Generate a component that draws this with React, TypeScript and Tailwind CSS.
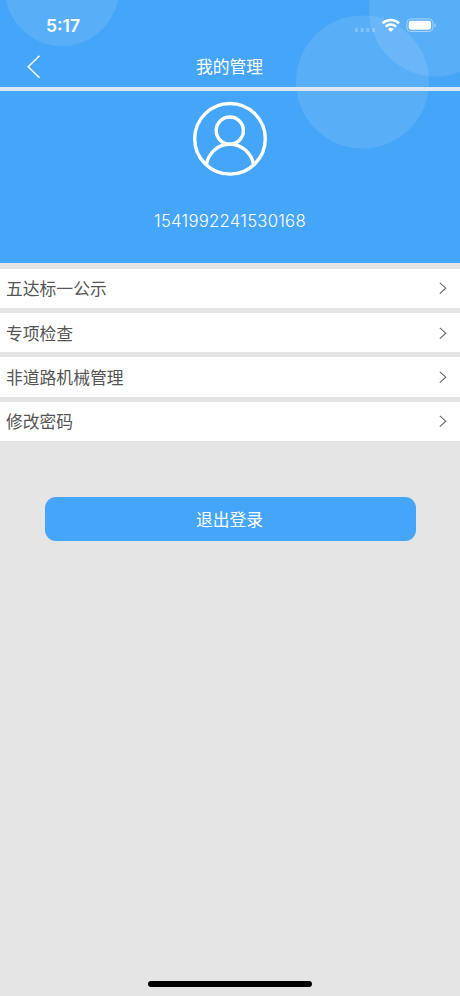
import React from "react";

const MENU_ITEMS = ["五达标一公示", "专项检查", "非道路机械管理", "修改密码"];

export default function App() {
  return (
    <div className="w-[460px] h-[996px] relative flex flex-col overflow-hidden bg-[#e5e5e5] font-['Inter','Noto_Sans_CJK_SC',sans-serif]">
      <header className="relative h-[263px] shrink-0 flex flex-col overflow-hidden bg-[#45a5f8] text-white">
        <Bubbles />
        <StatusBar />
        <NavBar title="我的管理" />
        <div className="relative h-[4px] shrink-0 bg-[#dce7f1]" />
        <Profile account="1541992241530168" />
      </header>

      <ul className="mt-[5.5px] flex flex-col gap-[5px]">
        {MENU_ITEMS.map((label) => (
          <MenuRow key={label} label={label} />
        ))}
      </ul>

      <button className="mt-[55.5px] ml-[44.5px] w-[371px] h-[44.5px] shrink-0 rounded-[11px] bg-[#45a5f8] pt-[3px] pr-[1px] text-white text-[16.8px] leading-none">
        退出登录
      </button>

      <div className="mt-auto mb-[9px] mx-auto w-[164px] h-[6px] rounded-full bg-black" />
    </div>
  );
}

function Bubbles() {
  return (
    <svg className="absolute inset-0" width="460" height="263" fill="#fff" fillOpacity="0.11">
      <circle cx="62" cy="-11" r="57" />
      <circle cx="362.5" cy="82" r="66.5" />
      <circle cx="436" cy="9.5" r="67" />
    </svg>
  );
}

function StatusBar() {
  return (
    <div className="relative h-[46px] shrink-0 flex items-start justify-between pl-[46px]">
      <span className="pt-[16px] text-[17.5px] leading-[20px] font-semibold">5:17</span>
      <svg width="120" height="46" viewBox="340 0 120 46" fill="none">
        <g fill="#fff" fillOpacity="0.25">
          <rect x="355" y="28" width="3" height="4" rx="0.8" />
          <rect x="360.7" y="28" width="3" height="4" rx="0.8" />
          <rect x="366.4" y="28" width="3" height="4" rx="0.8" />
          <rect x="372.1" y="28" width="3" height="4" rx="0.8" />
        </g>
        <g stroke="#fff" strokeWidth="2.5">
          <path d="M382.5 23.3a11.8 11.8 0 0 1 16.6 0" />
          <path d="M385.6 26.6a7.5 7.5 0 0 1 10.4 0" />
        </g>
        <path d="M387.9 29.1a4.4 4.4 0 0 1 5.8 0l-2.9 3z" fill="#fff" />
        <rect x="406.9" y="18.9" width="26" height="12.6" rx="4" stroke="#fff" strokeOpacity="0.45" />
        <rect x="408.7" y="20.7" width="22.4" height="9" rx="2.4" fill="#fff" />
        <path d="M434.3 23.2c1.8.7 1.8 3.3 0 4z" fill="#fff" fillOpacity="0.5" />
      </svg>
    </div>
  );
}

function NavBar({ title }: { title: string }) {
  return (
    <div className="relative h-[41px] shrink-0 grid grid-cols-[1fr_auto_1fr] items-center">
      <svg className="ml-[26px]" width="16" height="26" viewBox="0 0 16 26" fill="none" stroke="#fff" strokeWidth="1.5">
        <path d="M13.5 1.8 2.2 12.7l11.3 11" />
      </svg>
      <h1 className="pt-[2px] pr-[1px] text-[16.8px] leading-none font-normal">{title}</h1>
    </div>
  );
}

function Profile({ account }: { account: string }) {
  return (
    <div className="relative flex flex-col items-center pt-[10px]">
      <svg width="76" height="76" viewBox="0 0 76 76" fill="none" stroke="#fff" strokeWidth="3.4">
        <circle cx="38" cy="37.8" r="35.3" />
        <circle cx="37.8" cy="29.6" r="13.6" />
        <path d="M14.2 64.2C16.5 51.5 26 43.2 37.8 43.2S59.5 51.5 61.8 64.2" />
      </svg>
      <span className="mt-[33px] text-[16.8px] leading-[22px] font-light tracking-[0.22px]">{account}</span>
    </div>
  );
}

function MenuRow({ label }: { label: string }) {
  return (
    <li className="h-[39.4px] shrink-0 flex items-center justify-between pl-[6px] pr-[12px] bg-white text-[#555]">
      <span className="pt-[3px] text-[16.8px] leading-none">{label}</span>
      <svg width="10" height="14" viewBox="0 0 10 14" fill="none" stroke="#666" strokeWidth="1.1">
        <path d="m1.8 1.8 6 5.4-6 5.4" />
      </svg>
    </li>
  );
}
